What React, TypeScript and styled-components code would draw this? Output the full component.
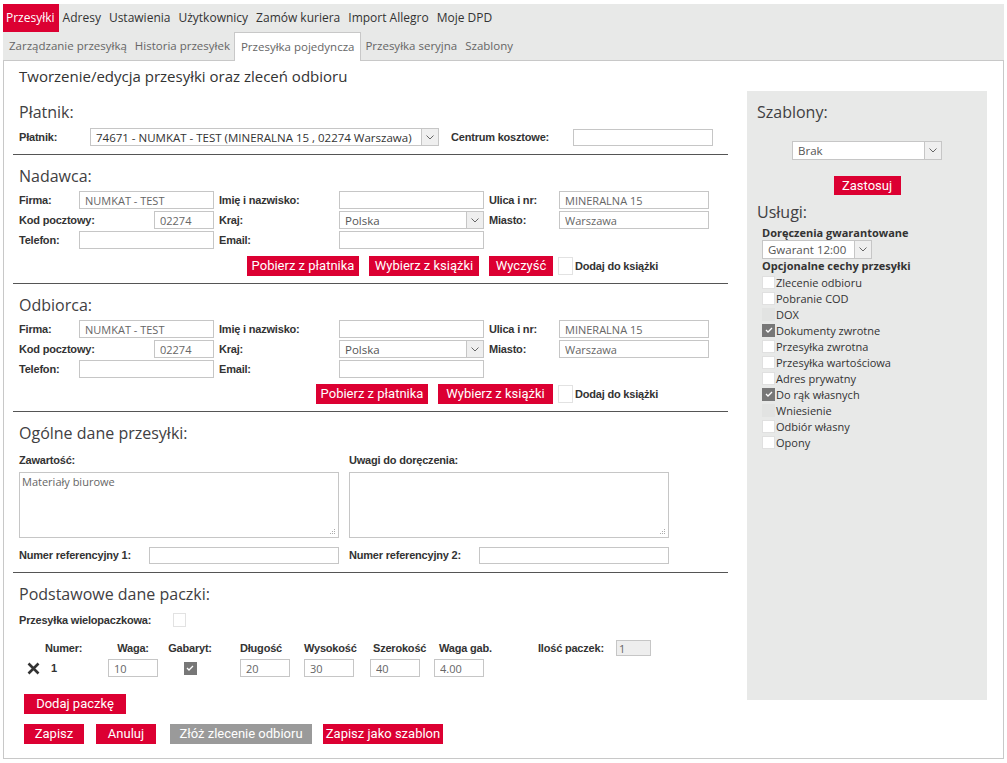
import React from 'react'
import styled, { createGlobalStyle } from 'styled-components'

const RED = '#dc0032'

const GlobalStyle = createGlobalStyle`
  html, body {
    margin: 0;
    padding: 0;
    background: #fff;
  }
  body {
    font-family: "Open Sans", "Liberation Sans", sans-serif;
    color: #333;
  }
  * {
    box-sizing: border-box;
  }
`

const Page = styled.div`
  width: 1004px;
  padding: 4px 0 0 3px;
`

const TopBar = styled.div`
  width: 1001px;
  background: #e8e9e8;
`

const NavRow = styled.div`
  display: flex;
  height: 28px;
  align-items: stretch;
`

const NavItem = styled.div<{ $active?: boolean }>`
  padding: 0 4px;
  line-height: 28px;
  font-size: 12px;
  color: ${p => (p.$active ? '#fff' : '#333')};
  background: ${p => (p.$active ? RED : 'transparent')};
  white-space: nowrap;
  &:first-child {
    padding: 0 4px 0 3px;
  }
`

const SubNavItem = styled.div<{ $active?: boolean }>`
  padding: 0 ${p => (p.$active ? '6px' : '4px')};
  margin-bottom: ${p => (p.$active ? '-1px' : '0')};
  line-height: 27px;
  font-size: 11.5px;
  color: #666;
  white-space: nowrap;
  background: ${p => (p.$active ? '#fff' : 'transparent')};
  border: ${p => (p.$active ? '1px solid #c8c8c8' : 'none')};
  border-bottom: none;
  position: relative;
  z-index: 1;
  &:first-child {
    padding-left: 6px;
  }
`

const Panel = styled.div`
  width: 1001px;
  height: 699px;
  border: 1px solid #c8c8c8;
  background: #fff;
`

const Title = styled.h1`
  margin: 0;
  padding: 5px 0 0 15px;
  height: 25px;
  font-size: 15px;
  line-height: 20px;
  font-weight: 400;
  color: #333;
`

const Body = styled.div`
  display: flex;
  padding-left: 9px;
`

const LeftCol = styled.div`
  width: 715px;
`

const Section = styled.section<{ $top?: number }>`
  padding: ${p => p.$top ?? 11}px 6px 7px 6px;
  border-bottom: 1px solid #555;
  &:last-child {
    border-bottom: none;
  }
`

const Heading = styled.h2<{ $mb?: number }>`
  margin: 0 0 ${p => p.$mb ?? 4}px 0;
  font-size: 16px;
  line-height: 20px;
  font-weight: 400;
  color: #414042;
`

const Label = styled.span<{ $w?: number }>`
  font-family: "Liberation Sans", Arial, sans-serif;
  font-weight: 700;
  font-size: 11px;
  letter-spacing: -0.2px;
  color: #333;
  white-space: nowrap;
  ${p => (p.$w ? `width: ${p.$w}px; flex: none;` : '')}
`

const TextInput = styled.input<{ $w: number; $h?: number; $grey?: boolean }>`
  width: ${p => p.$w}px;
  height: ${p => p.$h ?? 18}px;
  flex: none;
  border: 1px solid #c6c6c6;
  background: ${p => (p.$grey ? '#eeeeee' : '#fff')};
  padding: 0 ${p => (p.$grey ? 2 : 5)}px;
  font-family: "Open Sans", sans-serif;
  font-size: 11px;
  color: #666;
  outline: none;
`

const SelectBox = styled.div<{ $w: number; $h?: number }>`
  width: ${p => p.$w}px;
  height: ${p => p.$h ?? 18}px;
  flex: none;
  display: flex;
  border: 1px solid #c6c6c6;
  background: #fff;
`

const SelectText = styled.span<{ $dark?: boolean }>`
  flex: 1;
  padding: 0 5px;
  display: flex;
  align-items: center;
  font-size: 11.5px;
  color: ${p => (p.$dark ? '#333' : '#555')};
  white-space: nowrap;
  overflow: hidden;
`

const SelectArrow = styled.span`
  width: 17px;
  border-left: 1px solid #c6c6c6;
  background: #efefef;
  display: flex;
  align-items: center;
  justify-content: center;
`

const Select = ({ w, h, text, dark }: { w: number; h?: number; text: string; dark?: boolean }) => (
  <SelectBox $w={w} $h={h}>
    <SelectText $dark={dark}>{text}</SelectText>
    <SelectArrow>
      <svg width="8" height="5" viewBox="0 0 8 5">
        <path d="M0.5 0.5 L4 4 L7.5 0.5" fill="none" stroke="#666" strokeWidth="1" />
      </svg>
    </SelectArrow>
  </SelectBox>
)

const Row = styled.div<{ $h?: number; $mt?: number }>`
  display: flex;
  align-items: center;
  height: ${p => p.$h ?? 20}px;
  margin-top: ${p => p.$mt ?? 0}px;
`

const AddrGrid = styled.div`
  display: grid;
  grid-template-columns: 195px 265px 220px;
  grid-auto-rows: 20px;
  column-gap: 5px;
`

const Field = styled.div`
  display: flex;
  align-items: center;
  justify-content: space-between;
`

const ButtonRow = styled.div<{ $mt: number }>`
  display: flex;
  justify-content: flex-end;
  align-items: center;
  gap: 10px;
  height: 20px;
  margin-top: ${p => p.$mt}px;
  padding-right: 64px;
`

const Btn = styled.button<{ $w?: number; $h?: number; $grey?: boolean }>`
  height: ${p => p.$h ?? 20}px;
  ${p => (p.$w ? `width: ${p.$w}px;` : '')}
  padding: 0;
  border: none;
  background: ${p => (p.$grey ? '#9a9a9a' : RED)};
  color: #fff;
  font-family: Roboto, "Open Sans", sans-serif;
  font-size: 13px;
  line-height: ${p => p.$h ?? 20}px;
  white-space: nowrap;
  cursor: pointer;
`

const AddBook = styled.label`
  display: flex;
  align-items: center;
  gap: 2px;
  margin-left: -5px;
`

const GhostBox = styled.span<{ $w: number; $h: number }>`
  width: ${p => p.$w}px;
  height: ${p => p.$h}px;
  border: 1px solid #e2e2e2;
  background: #fff;
  flex: none;
`

const TwoCols = styled.div`
  display: grid;
  grid-template-columns: 320px 320px;
  column-gap: 10px;
`

const ColLabel = styled(Label)`
  display: block;
  height: 16px;
  line-height: 16px;
  margin-top: 5px;
`

const Area = styled.div`
  height: 66px;
  margin-top: 4px;
  border: 1px solid #c6c6c6;
  padding: 1px 2px;
  font-size: 11px;
  color: #666;
  position: relative;
`

const Grip = styled.svg`
  position: absolute;
  right: 2px;
  bottom: 2px;
`

const Pkg = styled.div`
  display: flex;
  margin: 9px 0 0 5px;
`

const PkgCol = styled.div<{ $w: number; $center?: boolean }>`
  width: ${p => p.$w}px;
  flex: none;
  display: flex;
  flex-direction: column;
  align-items: ${p => (p.$center ? 'center' : 'flex-start')};
`

const PkgHead = styled.div<{ $pad?: number }>`
  height: 20px;
  display: flex;
  align-items: center;
  gap: 8px;
  padding-left: ${p => p.$pad ?? 0}px;
  white-space: nowrap;
`

const PkgCell = styled.div<{ $pad?: number }>`
  height: 20px;
  display: flex;
  align-items: center;
  padding-left: ${p => p.$pad ?? 0}px;
`

const Num = styled(Label)`
  margin-left: 11px;
`

const CheckBox = styled.span<{ $state: 'off' | 'on' | 'disabled' }>`
  width: 13px;
  height: 13px;
  flex: none;
  display: inline-flex;
  align-items: center;
  justify-content: center;
  background: ${p => (p.$state === 'on' ? '#777' : p.$state === 'disabled' ? '#e2e3e2' : '#fff')};
  border: 1px solid ${p => (p.$state === 'on' ? '#777' : p.$state === 'disabled' ? '#e2e3e2' : '#e0e0e0')};
`

const Check = ({ state }: { state: 'off' | 'on' | 'disabled' }) => (
  <CheckBox $state={state}>
    {state === 'on' && (
      <svg width="8" height="6" viewBox="0 0 8 6">
        <path d="M1 3 L3 5 L7 1" fill="none" stroke="#fff" strokeWidth="1.3" />
      </svg>
    )}
  </CheckBox>
)

const Actions = styled.div<{ $mt: number }>`
  display: flex;
  margin: ${p => p.$mt}px 0 0 5px;
`

const Side = styled.aside`
  width: 240px;
  height: 609px;
  margin: 5px 0 0 19px;
  padding-top: 11px;
  background: #e8e9e8;
  flex: none;
`

const SideHeading = styled(Heading)`
  margin: 0 0 0 10px;
`

const Centered = styled.div<{ $mt: number }>`
  display: flex;
  justify-content: center;
  margin-top: ${p => p.$mt}px;
`

const Services = styled.div`
  padding-left: 15px;
`

const SubTitle = styled.div<{ $mt?: number }>`
  font-size: 11px;
  font-weight: 700;
  line-height: 14px;
  color: #333;
  margin-top: ${p => p.$mt ?? 0}px;
`

const OptList = styled.ul`
  list-style: none;
  margin: 1px 0 0;
  padding: 0;
`

const OptItem = styled.li`
  display: flex;
  align-items: center;
  gap: 1px;
  height: 16px;
  font-size: 11px;
  color: #333;
`

const XIcon = () => (
  <svg width="13" height="13" viewBox="0 0 13 13">
    <path d="M1.5 1.5 L11.5 11.5 M11.5 1.5 L1.5 11.5" stroke="#333" strokeWidth="2.6" />
  </svg>
)

const GripDots = () => (
  <Grip width="6" height="6" viewBox="0 0 6 6">
    <rect x="4" y="0" width="1" height="1" fill="#aaa" />
    <rect x="2" y="2" width="1" height="1" fill="#aaa" />
    <rect x="4" y="2" width="1" height="1" fill="#aaa" />
    <rect x="0" y="4" width="1" height="1" fill="#aaa" />
    <rect x="2" y="4" width="1" height="1" fill="#aaa" />
    <rect x="4" y="4" width="1" height="1" fill="#aaa" />
  </Grip>
)

const Party = ({ name, showClear, mt, bookW }: { name: string; showClear?: boolean; mt: number; bookW: number }) => (
  <Section>
    <Heading>{name}</Heading>
    <AddrGrid>
      <Field><Label>Firma:</Label><TextInput $w={135} defaultValue="NUMKAT - TEST" readOnly /></Field>
      <Field><Label>Imię i nazwisko:</Label><TextInput $w={145} readOnly /></Field>
      <Field><Label>Ulica i nr:</Label><TextInput $w={150} defaultValue="MINERALNA 15" readOnly /></Field>
      <Field><Label>Kod pocztowy:</Label><TextInput $w={60} defaultValue="02274" readOnly /></Field>
      <Field><Label>Kraj:</Label><Select w={145} text="Polska" /></Field>
      <Field><Label>Miasto:</Label><TextInput $w={150} defaultValue="Warszawa" readOnly /></Field>
      <Field><Label>Telefon:</Label><TextInput $w={135} readOnly /></Field>
      <Field><Label>Email:</Label><TextInput $w={145} readOnly /></Field>
    </AddrGrid>
    <ButtonRow $mt={mt}>
      <Btn $w={112}>Pobierz z płatnika</Btn>
      <Btn $w={bookW}>Wybierz z książki</Btn>
      {showClear && <Btn $w={64}>Wyczyść</Btn>}
      <AddBook>
        <GhostBox $w={15} $h={18} />
        <Label>Dodaj do książki</Label>
      </AddBook>
    </ButtonRow>
  </Section>
)

const options: [string, 'off' | 'on' | 'disabled'][] = [
  ['Zlecenie odbioru', 'off'],
  ['Pobranie COD', 'off'],
  ['DOX', 'disabled'],
  ['Dokumenty zwrotne', 'on'],
  ['Przesyłka zwrotna', 'off'],
  ['Przesyłka wartościowa', 'off'],
  ['Adres prywatny', 'off'],
  ['Do rąk własnych', 'on'],
  ['Wniesienie', 'disabled'],
  ['Odbiór własny', 'off'],
  ['Opony', 'off'],
]

const App: React.FC = () => {
  return (
    <Page>
      <GlobalStyle />
      <TopBar>
        <NavRow>
          <NavItem $active>Przesyłki</NavItem>
          <NavItem>Adresy</NavItem>
          <NavItem>Ustawienia</NavItem>
          <NavItem>Użytkownicy</NavItem>
          <NavItem>Zamów kuriera</NavItem>
          <NavItem>Import Allegro</NavItem>
          <NavItem>Moje DPD</NavItem>
        </NavRow>
        <NavRow>
          <SubNavItem>Zarządzanie przesyłką</SubNavItem>
          <SubNavItem>Historia przesyłek</SubNavItem>
          <SubNavItem $active>Przesyłka pojedyncza</SubNavItem>
          <SubNavItem>Przesyłka seryjna</SubNavItem>
          <SubNavItem>Szablony</SubNavItem>
        </NavRow>
      </TopBar>
      <Panel>
        <Title>Tworzenie/edycja przesyłki oraz zleceń odbioru</Title>
        <Body>
          <LeftCol>
            <Section $top={16}>
              <Heading $mb={5}>Płatnik:</Heading>
              <Row>
                <Label $w={71}>Płatnik:</Label>
                <Select w={349} dark text="74671 - NUMKAT - TEST (MINERALNA 15 , 02274 Warszawa)" />
                <Label $w={122} style={{ marginLeft: 12 }}>Centrum kosztowe:</Label>
                <TextInput $w={140} $h={17} readOnly />
              </Row>
            </Section>

            <Party name="Nadawca:" showClear mt={6} bookW={110} />
            <Party name="Odbiorca:" mt={5} bookW={115} />

            <Section>
              <Heading>Ogólne dane przesyłki:</Heading>
              <TwoCols>
                <div>
                  <ColLabel>Zawartość:</ColLabel>
                  <Area>
                    Materiały biurowe
                    <GripDots />
                  </Area>
                  <Row $mt={7}>
                    <Field style={{ width: '100%' }}>
                      <Label>Numer referencyjny 1:</Label>
                      <TextInput $w={190} $h={17} readOnly />
                    </Field>
                  </Row>
                </div>
                <div>
                  <ColLabel>Uwagi do doręczenia:</ColLabel>
                  <Area>
                    <GripDots />
                  </Area>
                  <Row $mt={7}>
                    <Field style={{ width: '100%' }}>
                      <Label>Numer referencyjny 2:</Label>
                      <TextInput $w={190} $h={17} readOnly />
                    </Field>
                  </Row>
                </div>
              </TwoCols>
            </Section>

            <Section>
              <Heading $mb={7}>Podstawowe dane paczki:</Heading>
              <Row $h={18}>
                <Label $w={154}>Przesyłka wielopaczkowa:</Label>
                <GhostBox $w={13} $h={14} />
              </Row>
              <Pkg>
                <PkgCol $w={76}>
                  <PkgHead $pad={21}><Label>Numer:</Label></PkgHead>
                  <PkgCell $pad={3}><XIcon /><Num>1</Num></PkgCell>
                </PkgCol>
                <PkgCol $w={66} $center>
                  <PkgHead><Label>Waga:</Label></PkgHead>
                  <PkgCell><TextInput $w={50} defaultValue="10" readOnly /></PkgCell>
                </PkgCol>
                <PkgCol $w={48} $center>
                  <PkgHead><Label>Gabaryt:</Label></PkgHead>
                  <PkgCell><Check state="on" /></PkgCell>
                </PkgCol>
                <PkgCol $w={90}>
                  <PkgHead $pad={26}><Label>Długość</Label></PkgHead>
                  <PkgCell $pad={26}><TextInput $w={50} defaultValue="20" readOnly /></PkgCell>
                </PkgCol>
                <PkgCol $w={66}>
                  <PkgHead><Label>Wysokość</Label></PkgHead>
                  <PkgCell><TextInput $w={50} defaultValue="30" readOnly /></PkgCell>
                </PkgCol>
                <PkgCol $w={64}>
                  <PkgHead $pad={3}><Label>Szerokość</Label></PkgHead>
                  <PkgCell><TextInput $w={50} defaultValue="40" readOnly /></PkgCell>
                </PkgCol>
                <PkgCol $w={104}>
                  <PkgHead $pad={5}><Label>Waga gab.</Label></PkgHead>
                  <PkgCell><TextInput $w={50} defaultValue="4.00" readOnly /></PkgCell>
                </PkgCol>
                <PkgCol $w={120}>
                  <PkgHead>
                    <Label $w={70}>Ilość paczek:</Label>
                    <TextInput $w={35} $h={16} $grey defaultValue="1" readOnly />
                  </PkgHead>
                </PkgCol>
              </Pkg>
              <Actions $mt={16}>
                <Btn $w={102}>Dodaj paczkę</Btn>
              </Actions>
              <Actions $mt={10}>
                <Btn $w={60}>Zapisz</Btn>
                <Btn $w={60} style={{ marginLeft: 12 }}>Anuluj</Btn>
                <Btn $w={142} $grey style={{ marginLeft: 14 }}>Złóż zlecenie odbioru</Btn>
                <Btn $w={120} style={{ marginLeft: 11 }}>Zapisz jako szablon</Btn>
              </Actions>
            </Section>
          </LeftCol>

          <Side>
            <SideHeading>Szablony:</SideHeading>
            <Centered $mt={19}>
              <Select w={150} h={19} text="Brak" />
            </Centered>
            <Centered $mt={16}>
              <Btn $w={67} $h={19}>Zastosuj</Btn>
            </Centered>
            <SideHeading style={{ marginTop: 7 }}>Usługi:</SideHeading>
            <Services>
              <SubTitle $mt={4}>Doręczenia gwarantowane</SubTitle>
              <Select w={110} h={19} text="Gwarant 12:00" />
              <SubTitle>Opcjonalne cechy przesyłki</SubTitle>
              <OptList>
                {options.map(([label, state]) => (
                  <OptItem key={label}>
                    <Check state={state} />
                    {label}
                  </OptItem>
                ))}
              </OptList>
            </Services>
          </Side>
        </Body>
      </Panel>
    </Page>
  )
}

export default App
